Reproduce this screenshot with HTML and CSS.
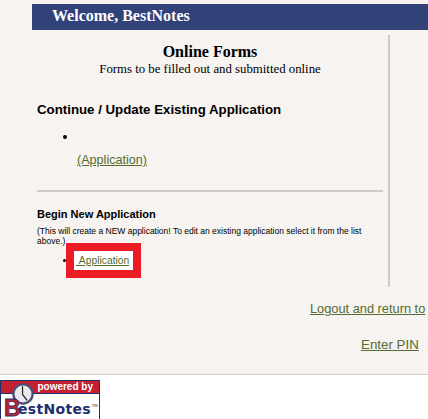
FILE: index.html
```html
<!DOCTYPE html>
<html lang="en">
<head>
<meta charset="utf-8">
<title>Online Forms</title>
<link rel="stylesheet" href="styles.css">
</head>
<body>
<div class="page">
  <header class="banner">Welcome, BestNotes</header>
  <main class="panel">
    <div class="titles">
      <h1>Online Forms</h1>
      <p>Forms to be filled out and submitted online</p>
    </div>
    <h2>Continue / Update Existing Application</h2>
    <ul class="existing">
      <li>&nbsp;<br><a href="#">(Application)</a></li>
    </ul>
    <hr>
    <h3>Begin New Application</h3>
    <p class="note">(This will create a NEW application! To edit an existing application select it from the list above.)</p>
    <ul class="new">
      <li><a class="marked" href="#">&nbsp;Application</a></li>
    </ul>
  </main>
  <nav class="links">
    <a class="logout" href="#">Logout and return to</a>
    <a class="pin" href="#">Enter PIN</a>
  </nav>
</div>
<footer class="foot">
  <div class="logo">
    <div class="logo-top">powered by</div>
    <svg class="clock" viewBox="0 0 24 24" aria-hidden="true">
      <circle cx="12" cy="12" r="10.500" fill="#e8e8ee" stroke="#4b4f72" stroke-width="2.500"/>
      <path d="M11.500 3.500V12.500L16.500 19" fill="none" stroke="#222" stroke-width="1.300"/>
    </svg>
    <div class="logo-bottom"><span class="big-b">B</span><span class="rest">estNotes</span><span class="tm">TM</span></div>
  </div>
</footer>
</body>
</html>
```
FILE: styles.css
```css
html, body { margin: 0; padding: 0; }
body { background: #fff; height: 419px; overflow: hidden; font-family: "Liberation Sans", Arial, sans-serif; color: #000; }
.page { height: 370px; background: #f6f3f0; border-bottom: 1px solid #ccc; padding: 4px 0 0 32px; overflow: hidden; }
.banner { height: 26px; background: #324178; color: #fff; font: bold 16px/24px "Liberation Serif", serif; padding-left: 20px; }
.panel { width: 346px; height: 252px; margin-top: 5px; padding: 0 5px; border-right: 2px solid #ccc; }
.titles { text-align: center; font-family: "Liberation Serif", serif; padding-top: 7px; }
h1 { margin: 0; font-size: 16px; line-height: 20px; font-weight: bold; }
.titles p { margin: 0; font-size: 12.800px; line-height: 15px; }
h2 { margin: 24px 0 0; font-size: 13.280px; line-height: 18px; font-weight: bold; }
ul { margin: 0; padding: 0 0 0 40px; }
.existing { margin-top: 5px; font-size: 12.600px; line-height: 24px; }
a { color: #556b2f; }
hr { margin: 18px 0 0; border: 0; height: 2px; background: #ccc; }
h3 { margin: 15px 0 0; font-size: 11px; line-height: 14px; font-weight: bold; }
.note { margin: 5px 0 0; font-size: 8.500px; line-height: 10px; }
.new { margin-top: 5px; font-size: 10.300px; padding-left: 39px; }
.marked { display: inline-block; background: #fff; box-shadow: 0 0 0 8px #ed1c24; margin-left: -2px; padding: 0 4px 0 2px; line-height: 19px; }
.links { display: flex; flex-direction: column; line-height: 16px; white-space: nowrap; }
.logout { margin: 14px 0 0 278px; font-size: 12.800px; }
.pin { margin: 20px 0 0 329px; font-size: 13.330px; }
.foot { padding-top: 5px; }
.logo { position: relative; width: 98px; height: 38px; border: 1px solid #1d2f6f; border-bottom: 0; background: #fff; overflow: hidden; }
.logo-top { height: 12px; background: #c4202f; border-bottom: 1px solid #1d2f6f; color: #fff; font-size: 10px; font-weight: bold; line-height: 11px; text-align: right; padding-right: 6px; }
.logo-bottom { position: relative; display: flex; align-items: flex-start; padding-left: 3px; white-space: nowrap; color: #1d2f6f; font-weight: bold; height: 24px; }
.big-b { flex: none; color: #c4202f; font-size: 23px; line-height: 20px; margin-top: 4px; -webkit-text-stroke: 0.800px #1d2f6f; }
.rest { font-family: "DejaVu Sans", sans-serif; font-size: 14px; line-height: 16px; letter-spacing: 0.300px; margin: 7px 0 0 -2.600px; }
.tm { font-size: 4px; margin: 10px 0 0 1px; color: #777; line-height: 4px; }
.clock { position: absolute; left: 11px; top: 2px; width: 22px; height: 22px; }
```
